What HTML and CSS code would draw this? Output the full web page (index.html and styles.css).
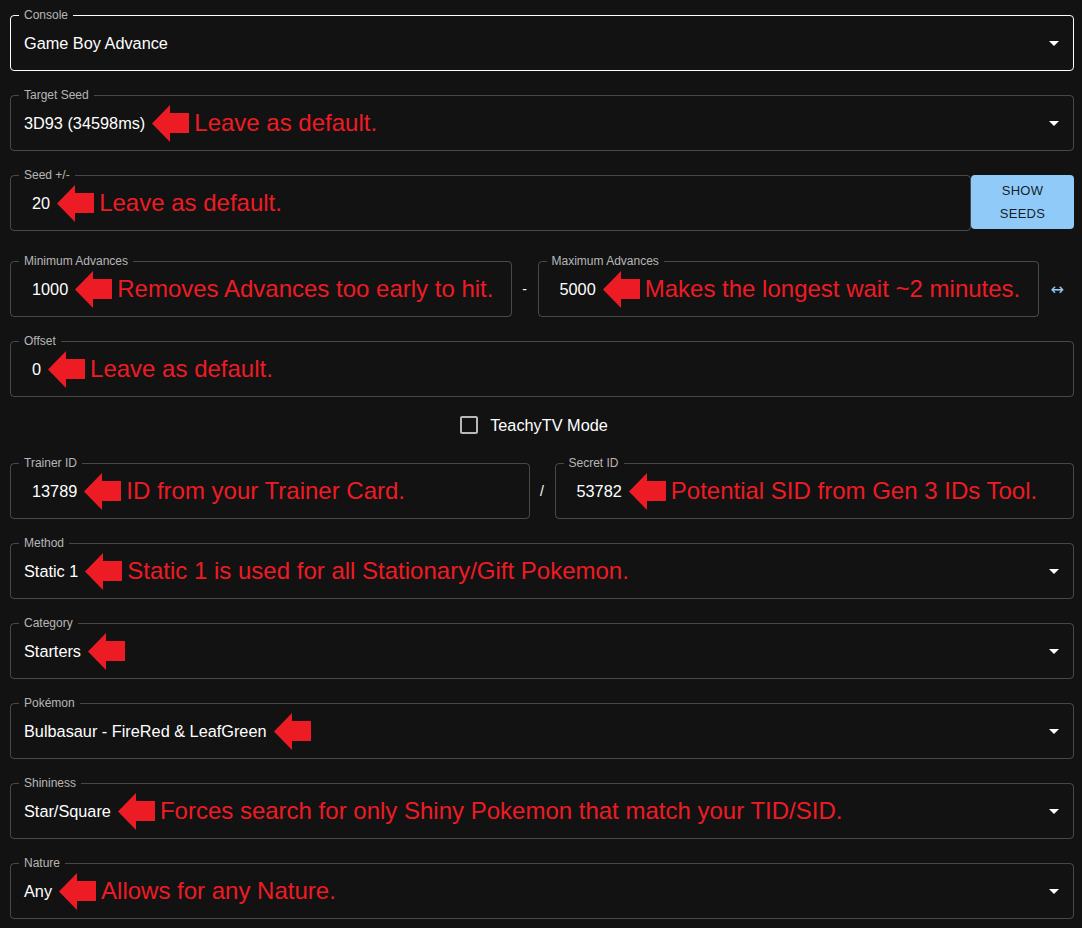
FILE: index.html
```html
<!DOCTYPE html>
<html lang="en">
<head>
<meta charset="utf-8">
<title>Static Generator</title>
<link rel="stylesheet" href="styles.css">
</head>
<body>
<main class="form">

  <div class="field select focused">
    <span class="label">Console</span>
    <div class="value"><span class="text">Game Boy Advance</span></div>
    <svg class="drop" viewBox="0 0 24 24"><path d="M7 10l5 5 5-5z"/></svg>
  </div>

  <div class="field select">
    <span class="label">Target Seed</span>
    <div class="value"><span class="text">3D93 (34598ms)</span>
      <svg class="arrow" viewBox="0 0 37 37"><polygon points="0,18.5 18,0 18,8 37,8 37,28 18,28 18,37"/></svg>
      <span class="note">Leave as default.</span></div>
    <svg class="drop" viewBox="0 0 24 24"><path d="M7 10l5 5 5-5z"/></svg>
  </div>

  <div class="row seed-row">
    <div class="field num">
      <span class="label">Seed +/-</span>
      <div class="value"><span class="text">20</span>
        <svg class="arrow" viewBox="0 0 37 37"><polygon points="0,18.5 18,0 18,8 37,8 37,28 18,28 18,37"/></svg>
        <span class="note">Leave as default.</span></div>
    </div>
    <button class="btn">Show<br>Seeds</button>
  </div>

  <div class="row pair range">
    <div class="field num">
      <span class="label">Minimum Advances</span>
      <div class="value"><span class="text">1000</span>
        <svg class="arrow" viewBox="0 0 37 37"><polygon points="0,18.5 18,0 18,8 37,8 37,28 18,28 18,37"/></svg>
        <span class="note">Removes Advances too early to hit.</span></div>
    </div>
    <span class="sep">-</span>
    <div class="field num">
      <span class="label">Maximum Advances</span>
      <div class="value"><span class="text">5000</span>
        <svg class="arrow" viewBox="0 0 37 37"><polygon points="0,18.5 18,0 18,8 37,8 37,28 18,28 18,37"/></svg>
        <span class="note">Makes the longest wait ~2 minutes.</span></div>
    </div>
    <span class="swap">↔</span>
  </div>

  <div class="field num">
    <span class="label">Offset</span>
    <div class="value"><span class="text">0</span>
      <svg class="arrow" viewBox="0 0 37 37"><polygon points="0,18.5 18,0 18,8 37,8 37,28 18,28 18,37"/></svg>
      <span class="note">Leave as default.</span></div>
  </div>

  <div class="check-row">
    <label class="check">
      <svg class="box" viewBox="0 0 24 24"><path d="M19 5v14H5V5h14m0-2H5c-1.11 0-2 .9-2 2v14c0 1.1.89 2 2 2h14c1.11 0 2-.9 2-2V5c0-1.1-.89-2-2-2z"/></svg>
      <span>TeachyTV Mode</span>
    </label>
  </div>

  <div class="row pair ids">
    <div class="field num">
      <span class="label">Trainer ID</span>
      <div class="value"><span class="text">13789</span>
        <svg class="arrow" viewBox="0 0 37 37"><polygon points="0,18.5 18,0 18,8 37,8 37,28 18,28 18,37"/></svg>
        <span class="note">ID from your Trainer Card.</span></div>
    </div>
    <span class="sep">/</span>
    <div class="field num">
      <span class="label">Secret ID</span>
      <div class="value"><span class="text">53782</span>
        <svg class="arrow" viewBox="0 0 37 37"><polygon points="0,18.5 18,0 18,8 37,8 37,28 18,28 18,37"/></svg>
        <span class="note">Potential SID from Gen 3 IDs Tool.</span></div>
    </div>
  </div>

  <div class="field select">
    <span class="label">Method</span>
    <div class="value"><span class="text">Static 1</span>
      <svg class="arrow" viewBox="0 0 37 37"><polygon points="0,18.5 18,0 18,8 37,8 37,28 18,28 18,37"/></svg>
      <span class="note">Static 1 is used for all Stationary/Gift Pokemon.</span></div>
    <svg class="drop" viewBox="0 0 24 24"><path d="M7 10l5 5 5-5z"/></svg>
  </div>

  <div class="field select">
    <span class="label">Category</span>
    <div class="value"><span class="text">Starters</span>
      <svg class="arrow" viewBox="0 0 37 37"><polygon points="0,18.5 18,0 18,8 37,8 37,28 18,28 18,37"/></svg></div>
    <svg class="drop" viewBox="0 0 24 24"><path d="M7 10l5 5 5-5z"/></svg>
  </div>

  <div class="field select">
    <span class="label">Pokémon</span>
    <div class="value"><span class="text">Bulbasaur - FireRed &amp; LeafGreen</span>
      <svg class="arrow" viewBox="0 0 37 37"><polygon points="0,18.5 18,0 18,8 37,8 37,28 18,28 18,37"/></svg></div>
    <svg class="drop" viewBox="0 0 24 24"><path d="M7 10l5 5 5-5z"/></svg>
  </div>

  <div class="field select">
    <span class="label">Shininess</span>
    <div class="value"><span class="text">Star/Square</span>
      <svg class="arrow" viewBox="0 0 37 37"><polygon points="0,18.5 18,0 18,8 37,8 37,28 18,28 18,37"/></svg>
      <span class="note">Forces search for only Shiny Pokemon that match your TID/SID.</span></div>
    <svg class="drop" viewBox="0 0 24 24"><path d="M7 10l5 5 5-5z"/></svg>
  </div>

  <div class="field select">
    <span class="label">Nature</span>
    <div class="value"><span class="text">Any</span>
      <svg class="arrow" viewBox="0 0 37 37"><polygon points="0,18.5 18,0 18,8 37,8 37,28 18,28 18,37"/></svg>
      <span class="note">Allows for any Nature.</span></div>
    <svg class="drop" viewBox="0 0 24 24"><path d="M7 10l5 5 5-5z"/></svg>
  </div>

</main>
</body>
</html>
```

FILE: styles.css
```css
* { box-sizing: border-box; }

html, body {
  margin: 0;
  background: #121212;
  color: #fff;
  font-family: "Liberation Sans", Arial, sans-serif;
}

.form {
  display: flex;
  flex-direction: column;
  gap: 24px;
  padding: 15px 8px 0 10px;
  height: 928px;
  overflow: hidden;
}

.field {
  position: relative;
  height: 56px;
  border: 1px solid rgba(255, 255, 255, 0.23);
  border-radius: 4px;
  min-width: 0;
}

.field.focused { border-color: #fff; }

.label {
  position: absolute;
  top: -8px;
  left: 8px;
  padding: 0 5px;
  font-size: 12px;
  line-height: 14px;
  color: rgba(255, 255, 255, 0.7);
  background: #121212;
  white-space: nowrap;
}

.value {
  display: flex;
  align-items: center;
  height: 100%;
  padding: 0 14px 0 13px;
  font-size: 16.3px;
  white-space: nowrap;
}

.field.num .value { padding-left: 21px; }

.text { color: #fff; line-height: 23px; }

.arrow {
  width: 37px;
  height: 37px;
  margin-left: 7px;
  fill: #ed1c24;
  flex: none;
}

.note {
  margin-left: 5px;
  color: #ed1c24;
  font-size: 24px;
  line-height: 28px;
}

.drop {
  position: absolute;
  right: 7px;
  top: 15px;
  width: 24px;
  height: 24px;
  fill: #fff;
}

.row { display: flex; }

.seed-row .field { flex: 1; }

.btn {
  width: 103px;
  height: 54px;
  flex: none;
  border: 0;
  border-radius: 4px;
  background: #90caf9;
  color: rgba(0, 0, 0, 0.87);
  font-family: "Liberation Sans", Arial, sans-serif;
  font-size: 13px;
  letter-spacing: 0.3px;
  line-height: 23px;
  text-transform: uppercase;
  padding: 0;
}

.pair {
  display: grid;
  align-items: center;
}

.range {
  grid-template-columns: 1fr 26px 1fr 35px;
  margin-top: 6px;
}

.ids { grid-template-columns: 1fr 25px 1fr; }

.sep {
  text-align: center;
  font-size: 14px;
  color: #fff;
}

.swap {
  text-align: right;
  padding-right: 10px;
  font-family: "DejaVu Sans", sans-serif;
  font-size: 16px;
  color: #90caf9;
}

.check-row {
  display: flex;
  justify-content: center;
  align-items: center;
  height: 42px;
  margin: -17px 0 -7px;
  padding-right: 19px;
}

.check {
  display: flex;
  align-items: center;
  gap: 9px;
  font-size: 16.3px;
}

.box {
  width: 24px;
  height: 24px;
  fill: rgba(255, 255, 255, 0.7);
}
```
